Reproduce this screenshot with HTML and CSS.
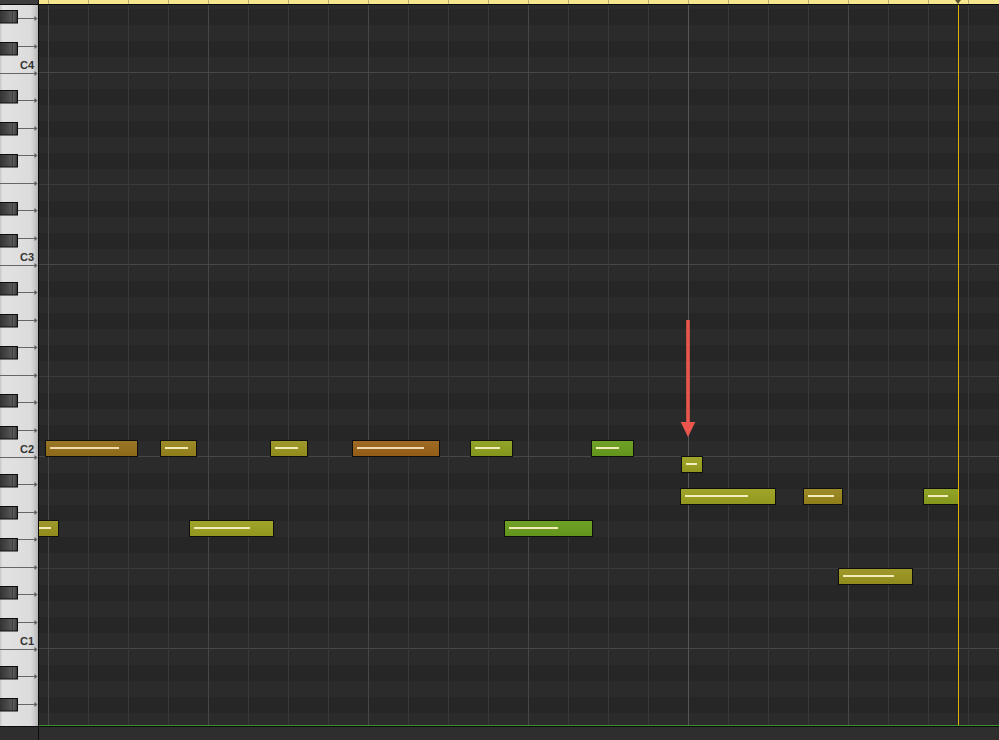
FILE: index.html
```html
<!DOCTYPE html>
<html lang="en">
<head>
    <meta charset="UTF-8">
    <title>Piano Roll</title>
    <link rel="stylesheet" href="styles.css">
</head>
<body>
    <div class="roll">
        <div class="ruler-row">
            <div class="corner"></div>
            <div class="ruler"><span class="ruler-head"></span></div>
        </div>

        <div class="main">
            <div class="piano">
                <svg class="keyboard" width="38" height="721" viewBox="0 0 38 721">
                    <defs>
                        <linearGradient id="white-key" x1="0" y1="0" x2="1" y2="0">
                            <stop offset="0" stop-color="#c6c6c6"/>
                            <stop offset="0.07" stop-color="#e2e2e2"/>
                            <stop offset="0.8" stop-color="#dcdcdc"/>
                            <stop offset="0.9" stop-color="#cdcdcd"/>
                            <stop offset="1" stop-color="#b4b4b4"/>
                        </linearGradient>
                        <linearGradient id="black-key" x1="0" y1="0" x2="1" y2="0">
                            <stop offset="0" stop-color="#303030"/>
                            <stop offset="0.68" stop-color="#555555"/>
                            <stop offset="0.71" stop-color="#262626"/>
                            <stop offset="0.76" stop-color="#616161"/>
                            <stop offset="0.94" stop-color="#404040"/>
                            <stop offset="1" stop-color="#1c1c1c"/>
                        </linearGradient>
                    </defs>

                    <rect x="0" y="0" width="38" height="721" fill="url(#white-key)"/>

                    <!-- white key boundaries -->
                    <g class="key-lines">
                        <line x1="0" y1="13.5" x2="35" y2="13.5"/>
                        <line x1="0" y1="41.5" x2="35" y2="41.5"/>
                        <line x1="0" y1="68.5" x2="35" y2="68.5"/>
                        <line x1="0" y1="95.5" x2="35" y2="95.5"/>
                        <line x1="0" y1="123.5" x2="35" y2="123.5"/>
                        <line x1="0" y1="150.5" x2="35" y2="150.5"/>
                        <line x1="0" y1="178.5" x2="35" y2="178.5"/>
                        <line x1="0" y1="205.5" x2="35" y2="205.5"/>
                        <line x1="0" y1="233.5" x2="35" y2="233.5"/>
                        <line x1="0" y1="260.5" x2="35" y2="260.5"/>
                        <line x1="0" y1="287.5" x2="35" y2="287.5"/>
                        <line x1="0" y1="315.5" x2="35" y2="315.5"/>
                        <line x1="0" y1="342.5" x2="35" y2="342.5"/>
                        <line x1="0" y1="370.5" x2="35" y2="370.5"/>
                        <line x1="0" y1="397.5" x2="35" y2="397.5"/>
                        <line x1="0" y1="425.5" x2="35" y2="425.5"/>
                        <line x1="0" y1="452.5" x2="35" y2="452.5"/>
                        <line x1="0" y1="479.5" x2="35" y2="479.5"/>
                        <line x1="0" y1="507.5" x2="35" y2="507.5"/>
                        <line x1="0" y1="534.5" x2="35" y2="534.5"/>
                        <line x1="0" y1="562.5" x2="35" y2="562.5"/>
                        <line x1="0" y1="589.5" x2="35" y2="589.5"/>
                        <line x1="0" y1="617.5" x2="35" y2="617.5"/>
                        <line x1="0" y1="644.5" x2="35" y2="644.5"/>
                        <line x1="0" y1="671.5" x2="35" y2="671.5"/>
                        <line x1="0" y1="699.5" x2="35" y2="699.5"/>
                    </g>
                    <g class="key-tips">
                        <polygon points="34.5,11 37.5,13.5 34.5,16"/>
                        <polygon points="34.5,39 37.5,41.5 34.5,44"/>
                        <polygon points="34.5,66 37.5,68.5 34.5,71"/>
                        <polygon points="34.5,93 37.5,95.5 34.5,98"/>
                        <polygon points="34.5,121 37.5,123.5 34.5,126"/>
                        <polygon points="34.5,148 37.5,150.5 34.5,153"/>
                        <polygon points="34.5,176 37.5,178.5 34.5,181"/>
                        <polygon points="34.5,203 37.5,205.5 34.5,208"/>
                        <polygon points="34.5,231 37.5,233.5 34.5,236"/>
                        <polygon points="34.5,258 37.5,260.5 34.5,263"/>
                        <polygon points="34.5,285 37.5,287.5 34.5,290"/>
                        <polygon points="34.5,313 37.5,315.5 34.5,318"/>
                        <polygon points="34.5,340 37.5,342.5 34.5,345"/>
                        <polygon points="34.5,368 37.5,370.5 34.5,373"/>
                        <polygon points="34.5,395 37.5,397.5 34.5,400"/>
                        <polygon points="34.5,423 37.5,425.5 34.5,428"/>
                        <polygon points="34.5,450 37.5,452.5 34.5,455"/>
                        <polygon points="34.5,477 37.5,479.5 34.5,482"/>
                        <polygon points="34.5,505 37.5,507.5 34.5,510"/>
                        <polygon points="34.5,532 37.5,534.5 34.5,537"/>
                        <polygon points="34.5,560 37.5,562.5 34.5,565"/>
                        <polygon points="34.5,587 37.5,589.5 34.5,592"/>
                        <polygon points="34.5,615 37.5,617.5 34.5,620"/>
                        <polygon points="34.5,642 37.5,644.5 34.5,647"/>
                        <polygon points="34.5,669 37.5,671.5 34.5,674"/>
                        <polygon points="34.5,697 37.5,699.5 34.5,702"/>
                    </g>

                    <!-- black keys -->
                    <g class="black-keys">
                        <rect x="-1" y="5.5" width="18.5" height="12.5"/>
                        <rect x="-1" y="37.5" width="18.5" height="12.5"/>
                        <rect x="-1" y="85.5" width="18.5" height="12.5"/>
                        <rect x="-1" y="117.5" width="18.5" height="12.5"/>
                        <rect x="-1" y="149.5" width="18.5" height="12.5"/>
                        <rect x="-1" y="197.5" width="18.5" height="12.5"/>
                        <rect x="-1" y="229.5" width="18.5" height="12.5"/>
                        <rect x="-1" y="277.5" width="18.5" height="12.5"/>
                        <rect x="-1" y="309.5" width="18.5" height="12.5"/>
                        <rect x="-1" y="341.5" width="18.5" height="12.5"/>
                        <rect x="-1" y="389.5" width="18.5" height="12.5"/>
                        <rect x="-1" y="421.5" width="18.5" height="12.5"/>
                        <rect x="-1" y="469.5" width="18.5" height="12.5"/>
                        <rect x="-1" y="501.5" width="18.5" height="12.5"/>
                        <rect x="-1" y="533.5" width="18.5" height="12.5"/>
                        <rect x="-1" y="581.5" width="18.5" height="12.5"/>
                        <rect x="-1" y="613.5" width="18.5" height="12.5"/>
                        <rect x="-1" y="661.5" width="18.5" height="12.5"/>
                        <rect x="-1" y="693.5" width="18.5" height="12.5"/>
                    </g>

                    <g class="octave-labels">
                        <text x="34" y="64">C4</text>
                        <text x="34" y="256">C3</text>
                        <text x="34" y="448">C2</text>
                        <text x="34" y="640">C1</text>
                    </g>
                </svg>
            </div>

            <div class="grid">
                <!-- C2 -->
                <div class="note p-c2 c-amber" style="left:6px; width:93px"><span class="vel" style="width:69px"></span></div>
                <div class="note p-c2 c-ochre" style="left:121px; width:37px"><span class="vel" style="width:23px"></span></div>
                <div class="note p-c2 c-olive" style="left:231px; width:38px"><span class="vel" style="width:23px"></span></div>
                <div class="note p-c2 c-orange" style="left:313px; width:88px"><span class="vel" style="width:67px"></span></div>
                <div class="note p-c2 c-lime" style="left:431px; width:43px"><span class="vel" style="width:25px"></span></div>
                <div class="note p-c2 c-green" style="left:552px; width:43px"><span class="vel" style="width:23px"></span></div>
                <!-- B1 -->
                <div class="note p-b1 c-yellow" style="left:642px; width:22px"><span class="vel" style="width:11px"></span></div>
                <!-- A1 -->
                <div class="note p-a1 c-yellow" style="left:641px; width:96px"><span class="vel" style="width:63px"></span></div>
                <div class="note p-a1 c-ochre" style="left:764px; width:40px"><span class="vel" style="width:26px"></span></div>
                <div class="note p-a1 c-lime" style="left:884px; width:36px"><span class="vel" style="width:20px"></span></div>
                <!-- G1 -->
                <div class="note p-g1 c-olive" style="left:-6px; width:26px"><span class="vel" style="width:13px"></span></div>
                <div class="note p-g1 c-yellow" style="left:150px; width:85px"><span class="vel" style="width:56px"></span></div>
                <div class="note p-g1 c-green" style="left:465px; width:89px"><span class="vel" style="width:49px"></span></div>
                <!-- E1 -->
                <div class="note p-e1 c-olive" style="left:799px; width:75px"><span class="vel" style="width:51px"></span></div>

                <div class="playhead"></div>

                <svg class="arrow" width="16" height="118" viewBox="0 0 16 118">
                    <rect x="6.2" y="0" width="3.6" height="104"/>
                    <polygon points="0.7,102 15.3,102 8,117"/>
                </svg>
            </div>
        </div>

        <div class="footer">
            <div class="footer-left"></div>
            <div class="footer-right"></div>
        </div>
    </div>
</body>
</html>
```

FILE: styles.css
```css
body {
    margin: 0;
    padding: 0;
    background-color: #2e2e2e;
    font-family: 'Liberation Sans', Arial, sans-serif;
}

.roll {
    width: 999px;
    height: 740px;
    display: flex;
    flex-direction: column;
    overflow: hidden;
}

/* top ruler */
.ruler-row {
    display: flex;
    height: 4px;
    border-bottom: 1px solid #0c0c0c;
    flex: none;
}

.corner {
    width: 38px;
    background-color: #3e3e3e;
    border-right: 1px solid #0c0c0c;
}

.ruler {
    flex: 1;
    position: relative;
    background-color: #f6e78c;
    background-image: linear-gradient(to right, #bcae78 0 1px, transparent 1px);
    background-size: 40px 100%;
    background-position: 9px 0;
}

.ruler-head {
    position: absolute;
    left: 916px;
    top: 0;
    width: 0;
    height: 0;
    border-left: 3px solid transparent;
    border-right: 3px solid transparent;
    border-top: 4px solid #5a5232;
}

/* keyboard + grid */
.main {
    display: flex;
    height: 721px;
    flex: none;
}

.piano {
    width: 38px;
    flex: none;
    border-right: 1px solid #0c0c0c;
}

.keyboard {
    display: block;
}

.key-lines line {
    stroke: #666666;
    stroke-width: 1;
}

.key-tips polygon {
    fill: #5c5c5c;
}

.black-keys rect {
    fill: url(#black-key);
    stroke: #0c0c0c;
    stroke-width: 1;
}

.octave-labels text {
    font-family: 'Liberation Sans', Arial, sans-serif;
    font-size: 11px;
    font-weight: bold;
    fill: #333333;
    text-anchor: end;
}

.grid {
    flex: 1;
    position: relative;
    overflow: hidden;
    box-sizing: border-box;
    border-bottom: 1px solid #3f8f33;
    background-color: #2b2b2b;
    background-image:
        linear-gradient(to right, transparent 649px, #555555 649px 650px, transparent 650px),
        linear-gradient(to right, #474747 0 1px, transparent 1px),
        linear-gradient(to right, #393939 0 1px, transparent 1px),
        linear-gradient(to bottom, transparent 111px, #3b3b3b 111px 112px, transparent 112px 191px, #474747 191px),
        linear-gradient(to bottom,
            #2b2b2b 0 16px, #262626 16px 32px,
            #2b2b2b 32px 48px, #262626 48px 64px,
            #2b2b2b 64px 80px, #262626 80px 96px,
            #2b2b2b 96px 128px, #262626 128px 144px,
            #2b2b2b 144px 160px, #262626 160px 176px,
            #2b2b2b 176px);
    background-size: 100% 100%, 160px 100%, 40px 100%, 100% 192px, 100% 192px;
    background-position: 0 0, 9px 0, 9px 0, 0 68px, 0 68px;
    background-repeat: no-repeat, repeat-x, repeat-x, repeat-y, repeat-y;
}

/* notes */
.note {
    position: absolute;
    height: 17px;
    box-sizing: border-box;
    border: 1px solid #0e0e0e;
    background-image: linear-gradient(to bottom, rgba(255,255,255,0.05), rgba(0,0,0,0.06));
}

.vel {
    position: absolute;
    left: 4px;
    top: 6px;
    height: 2px;
    background-color: #f4ecb8;
}

.p-c2 { top: 435px; }
.p-b1 { top: 451px; }
.p-a1 { top: 483px; }
.p-g1 { top: 515px; }
.p-e1 { top: 563px; }

.c-orange { background-color: #9a6218; }
.c-amber  { background-color: #94701b; }
.c-ochre  { background-color: #98851d; }
.c-olive  { background-color: #9a931f; }
.c-yellow { background-color: #9ba020; }
.c-lime   { background-color: #8c9f1e; }
.c-green  { background-color: #689c1c; }

.c-orange .vel, .c-amber .vel { background-color: #f2dcae; }

.playhead {
    position: absolute;
    left: 919px;
    top: 0;
    bottom: 0;
    width: 1px;
    background-color: #dcb400;
}

.arrow {
    position: absolute;
    left: 641px;
    top: 315px;
    fill: #ea564d;
}

/* bottom bar */
.footer {
    flex: 1;
    display: flex;
    border-top: 1px solid #0c0c0c;
    background-color: #2e2e2e;
}

.footer-left {
    width: 38px;
    border-right: 1px solid #0c0c0c;
}

.footer-right {
    flex: 1;
}
```
